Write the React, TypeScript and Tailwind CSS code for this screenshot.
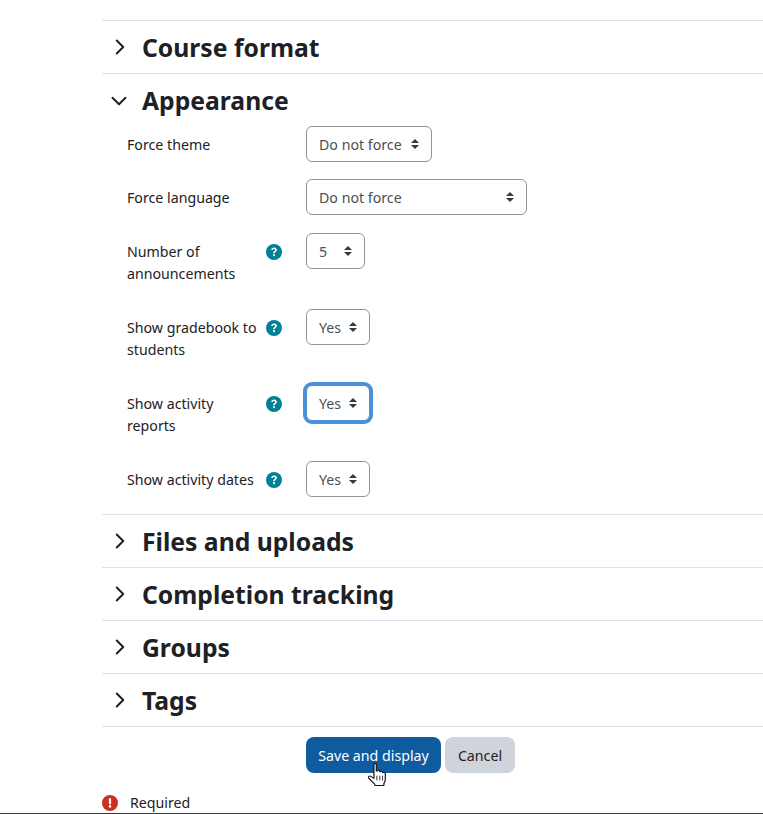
import { ChevronDown, ChevronRight } from 'lucide-react';

const FONT = "font-['Noto_Sans','Open_Sans',sans-serif]";

function SortArrows() {
  return (
    <svg width="8" height="10" viewBox="0 0 8 10" className="shrink-0">
      <path d="M4 0 L8 4 L0 4 Z" fill="#343a40" />
      <path d="M4 10 L8 6 L0 6 Z" fill="#343a40" />
    </svg>
  );
}

function HelpIcon() {
  return (
    <svg width="16" height="16" viewBox="0 0 16 16" className="shrink-0">
      <circle cx="8" cy="8" r="8" fill="#008196" />
      <path d="M5.2 6 C5.3 4.3 6.5 3.4 8.1 3.4 C9.8 3.4 10.9 4.4 10.9 5.8 C10.9 7 10.2 7.5 9.5 8 C9 8.3 8.8 8.6 8.8 9.3 L7.2 9.3 C7.2 8.1 7.6 7.5 8.3 7 C8.9 6.6 9.2 6.4 9.2 5.9 C9.2 5.3 8.8 5 8.1 5 C7.4 5 7 5.4 6.9 6.1 Z" fill="#fff" />
      <rect x="7.1" y="10.2" width="1.8" height="1.9" fill="#fff" />
    </svg>
  );
}

function Select({ value, width, focused }: { value: string; width: string; focused?: boolean }) {
  return (
    <div
      className={`flex h-[36px] items-center justify-between rounded-md border bg-white pl-3 pr-[12px] text-[14.2px] text-[#495057] ${width} ${
        focused ? 'border-[#4a90d9] shadow-[0_0_0_3px_#4a90d9]' : 'border-[#8f959e]'
      }`}
    >
      <span className="mt-[1px]">{value}</span>
      <SortArrows />
    </div>
  );
}

function Section({ title, open }: { title: string; open?: boolean }) {
  return (
    <div className={`flex h-[52px] items-center ${open ? '' : 'border-b border-[#dee2e6] box-content'}`}>
      <div className="flex w-10 shrink-0 justify-start pl-[4px]">
        {open ? (
          <ChevronDown size={26} strokeWidth={1.8} className="mt-[2px] text-[#1d2125]" />
        ) : (
          <ChevronRight size={26} strokeWidth={1.8} className="ml-[1px] text-[#1d2125]" />
        )}
      </div>
      <h3 className="mt-[3px] text-[24.7px] font-bold leading-none text-[#1d2125]">{title}</h3>
    </div>
  );
}

function Row({
  label,
  help,
  children,
  tall,
  height,
}: {
  label: string;
  help?: boolean;
  children: React.ReactNode;
  tall?: boolean;
  height?: string;
}) {
  return (
    <div className={`flex ${height ?? (tall ? 'h-[60px]' : 'h-[37px]')}`}>
      <div className="flex w-[179px] shrink-0 pt-[8px]">
        <div className="w-[135px] text-[14.2px] leading-[22px] text-[#1d2125]">{label}</div>
        {help && (
          <div className="ml-[4px] pt-[3px]">
            <HelpIcon />
          </div>
        )}
      </div>
      {children}
    </div>
  );
}

export default function App() {
  return (
    <div className={`relative h-[814px] w-[763px] overflow-hidden bg-white ${FONT}`}>
      <div className="ml-[102px] pt-5">
        <div className="border-t border-[#dee2e6]">
          <Section title="Course format" />
          <Section title="Appearance" open />
          <div className="flex h-[388px] flex-col gap-4 pl-[25px]">
            <Row label="Force theme">
              <Select value="Do not force" width="w-[126px]" />
            </Row>
            <Row label="Force language" height="h-[38px]">
              <Select value="Do not force" width="w-[221px]" />
            </Row>
            <Row label="Number of announcements" help tall>
              <Select value="5" width="w-[59px]" />
            </Row>
            <Row label="Show gradebook to students" help tall>
              <Select value="Yes" width="w-[64px]" />
            </Row>
            <Row label="Show activity reports" help tall>
              <Select value="Yes" width="w-[64px]" focused />
            </Row>
            <Row label="Show activity dates" help>
              <Select value="Yes" width="w-[64px]" />
            </Row>
          </div>
          <div className="border-t border-[#dee2e6]">
            <Section title="Files and uploads" />
            <Section title="Completion tracking" />
            <Section title="Groups" />
            <Section title="Tags" />
          </div>
        </div>

        <div className="mt-[10px] flex gap-[4px] pl-[204px]">
          <div className="flex h-[36px] w-[135px] items-center justify-center rounded-lg bg-[#0f5ba0] pt-[1px] text-[14.2px] text-white">
            Save and display
          </div>
          <div className="flex h-[36px] w-[70px] items-center justify-center rounded-lg bg-[#ced4da] pt-[1px] text-[14.2px] text-[#1d2125]">
            Cancel
          </div>
        </div>

        <div className="mt-[20px] flex items-center gap-[12px]">
          <svg width="16" height="16" viewBox="0 0 16 16" className="shrink-0">
            <circle cx="8" cy="8" r="8" fill="#ca3120" />
            <rect x="6.9" y="3.2" width="2.2" height="6" rx="0.6" fill="#fff" />
            <circle cx="8" cy="11.4" r="1.3" fill="#fff" />
          </svg>
          <span className="mt-[1px] text-[14.2px] leading-[18px] text-[#1d2125]">Required</span>
        </div>
      </div>

      {/* mouse pointer over the save button */}
      <svg
        width="18"
        height="23"
        viewBox="1 0.5 15.2 24.5"
        preserveAspectRatio="none"
        className="absolute left-[368px] top-[763px]"
      >
        <path
          d="M6 2 C6 0.8 8 0.8 8 2 L8 9 L9 9 C9 8 11 8 11 9.2 L11 10 C11.4 9 13.2 9 13.2 10.4 L13.2 11 C13.8 10 15.6 10.4 15.6 11.6 L15.6 18 C15.6 20 15 21 14.4 22.4 L14.4 24.5 L7 24.5 L6.6 23 C5 21 3 18.5 1.6 16.6 C0.6 15 2.4 13.6 3.8 15 L6 17 Z"
          fill="#fff"
          stroke="#111"
          strokeWidth="1"
          strokeLinejoin="round"
        />
        <path d="M8.5 14 V19 M11 14 V19 M13.3 14 V19" stroke="#111" strokeWidth="0.8" />
      </svg>

      <div className="absolute bottom-0 left-0 h-px w-full bg-[#343a40]" />
    </div>
  );
}
